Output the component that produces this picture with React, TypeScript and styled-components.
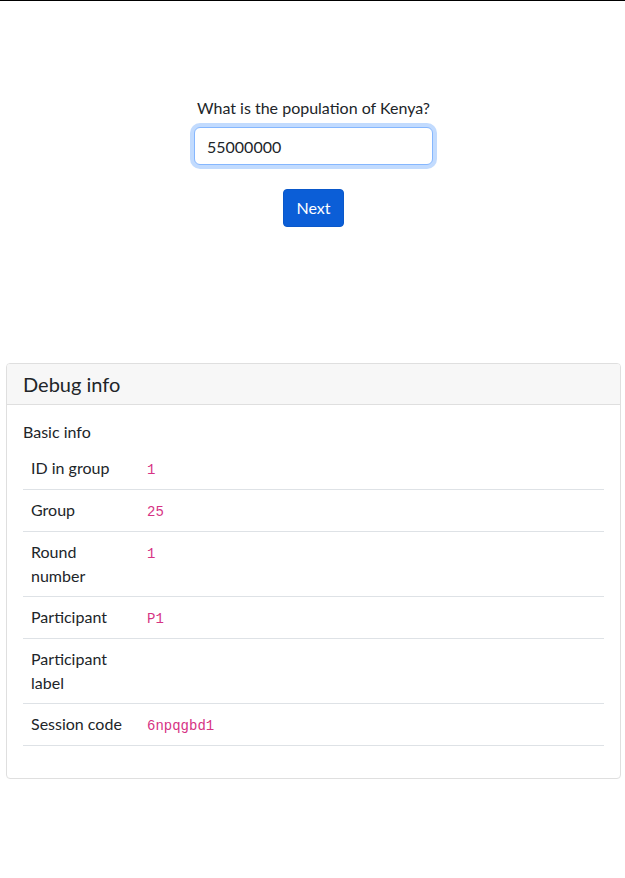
import React from "react";
import styled, { createGlobalStyle } from "styled-components";

const GlobalStyle = createGlobalStyle`
  *, *::before, *::after { box-sizing: border-box; }
  html, body { margin: 0; padding: 0; background: #fff; }
  body {
    font-family: Lato, "Noto Sans", sans-serif;
    font-size: 16px;
    line-height: 1.5;
    color: #212529;
    border-top: 1px solid #000;
  }
`;

const Page = styled.div`
  display: flex;
  flex-direction: column;
  margin: 0 4px 0 6px;
  padding-top: 95px;
  padding-bottom: 100px;
`;

const Form = styled.form`
  display: flex;
  flex-direction: column;
  align-items: center;
`;

const Label = styled.label`
  display: block;
  margin-bottom: 7px;
`;

const Input = styled.input`
  display: block;
  width: 239px;
  height: 38px;
  padding: 6px 12px;
  font: inherit;
  color: #212529;
  background: #fff;
  border: 1px solid #86b7fe;
  border-radius: 6px;
  box-shadow: 0 0 0 4px rgba(13, 110, 253, 0.25);
  outline: 0;
`;

const Button = styled.button`
  margin-top: 24px;
  height: 38px;
  padding: 6px 12px;
  font: inherit;
  color: #fff;
  background: #0b5ed7;
  border: 1px solid #0a58ca;
  border-radius: 4px;
`;

const Card = styled.section`
  margin-top: 136px;
  border: 1px solid #dfdfdf;
  border-radius: 4px;
  overflow: hidden;
`;

const CardHeader = styled.div`
  padding: 8px 16px;
  background: #f7f7f7;
  border-bottom: 1px solid #dfdfdf;
`;

const CardTitle = styled.h5`
  margin: 0;
  font-size: 20px;
  font-weight: 400;
  line-height: 1.2;
`;

const CardBody = styled.div`
  padding: 16px;
`;

const SectionTitle = styled.div`
  margin-top: -1px;
  margin-bottom: 4px;
`;

const Table = styled.table`
  width: 100%;
  border-collapse: collapse;
  margin-bottom: 16px;
`;

const Row = styled.tr`
  border-bottom: 1px solid #dee2e6;
`;

const HeadCell = styled.th`
  width: 116px;
  padding: 8px;
  font-weight: 400;
  text-align: left;
  vertical-align: top;
`;

const Cell = styled.td`
  padding: 8px;
  vertical-align: top;
`;

const Code = styled.code`
  font-family: "Liberation Mono", monospace;
  font-size: 14px;
  color: #d63384;
`;

const rows: [string, string][] = [
  ["ID in group", "1"],
  ["Group", "25"],
  ["Round number", "1"],
  ["Participant", "P1"],
  ["Participant label", ""],
  ["Session code", "6npqgbd1"],
];

export default function App() {
  return (
    <>
      <GlobalStyle />
      <Page>
        <Form onSubmit={(e) => e.preventDefault()}>
          <Label htmlFor="pop">What is the population of Kenya?</Label>
          <Input id="pop" defaultValue="55000000" />
          <Button type="submit">Next</Button>
        </Form>
        <Card>
          <CardHeader>
            <CardTitle>Debug info</CardTitle>
          </CardHeader>
          <CardBody>
            <SectionTitle>Basic info</SectionTitle>
            <Table>
              <tbody>
                {rows.map(([k, v]) => (
                  <Row key={k}>
                    <HeadCell>{k}</HeadCell>
                    <Cell>{v && <Code>{v}</Code>}</Cell>
                  </Row>
                ))}
              </tbody>
            </Table>
          </CardBody>
        </Card>
      </Page>
    </>
  );
}
